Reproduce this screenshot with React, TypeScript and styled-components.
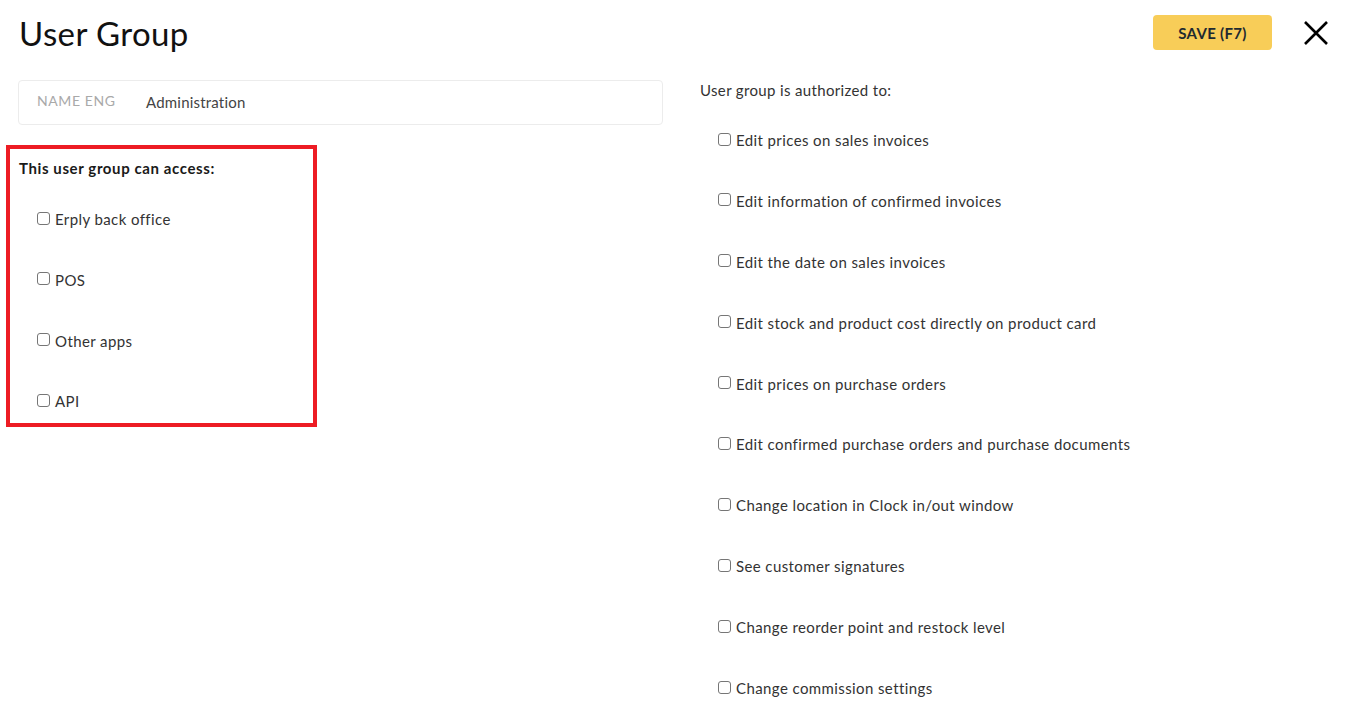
import React from "react";
import styled, { createGlobalStyle } from "styled-components";

const Global = createGlobalStyle`
  html, body { margin: 0; padding: 0; background: #fff; }
  body { font-family: "Lato", "Liberation Sans", sans-serif; color: #333; }
  * { box-sizing: border-box; }
`;

const Page = styled.div`
  width: 1369px;
  height: 727px;
  overflow: hidden;
`;

const Header = styled.header`
  display: flex;
  align-items: flex-start;
  justify-content: space-between;
  height: 80px;
  padding: 15px 39px 0 19px;
`;

const Title = styled.h1`
  margin: 0;
  font-size: 33px;
  font-weight: 400;
  line-height: 36px;
  letter-spacing: 0.4px;
  color: #111;
`;

const Actions = styled.div`
  display: flex;
  align-items: center;
  gap: 30px;
`;

const SaveButton = styled.button`
  width: 119px;
  height: 35px;
  border: none;
  border-radius: 4px;
  background: #f8cd58;
  color: #1f2a30;
  font-family: inherit;
  font-size: 15px;
  font-weight: 700;
  letter-spacing: 0.3px;
  padding: 0;
  cursor: pointer;
`;

const CloseButton = styled.button`
  width: 28px;
  height: 28px;
  border: none;
  background: none;
  padding: 0;
  display: flex;
  align-items: center;
  justify-content: center;
  cursor: pointer;
`;

const Body = styled.div`
  display: grid;
  grid-template-columns: 645px 1fr;
  column-gap: 37px;
  padding-left: 18px;
`;

const LeftColumn = styled.div`
  display: flex;
  flex-direction: column;
  gap: 20px;
`;

const NameField = styled.div`
  display: flex;
  align-items: center;
  height: 45px;
  border: 1px solid #ececec;
  border-radius: 4px;
  padding-left: 18px;
`;

const FieldLabel = styled.span`
  width: 109px;
  font-size: 14px;
  letter-spacing: 0.6px;
  color: #a9a9a9;
  text-transform: uppercase;
  margin-top: -4px;
`;

const FieldValue = styled.span`
  font-size: 15px;
  letter-spacing: 0.2px;
  color: #444;
  margin-top: -1px;
`;

const AccessBox = styled.section`
  width: 311px;
  margin-left: -12px;
  border: 4px solid #ed1c24;
  padding: 9px 9px 12px 9px;
`;

const SectionTitle = styled.div<{ $bold?: boolean }>`
  font-size: 15px;
  line-height: 20px;
  font-weight: ${(p) => (p.$bold ? 700 : 400)};
  letter-spacing: ${(p) => (p.$bold ? "0.6px" : "0.35px")};
  color: ${(p) => (p.$bold ? "#1a1a1a" : "#333")};
`;

const OptionList = styled.div<{ $top: number; $gap: number }>`
  display: flex;
  flex-direction: column;
  gap: ${(p) => p.$gap}px;
  margin-top: ${(p) => p.$top}px;
  padding-left: 18px;
`;

const Option = styled.label`
  display: flex;
  align-items: center;
  gap: 5px;
  font-size: 15px;
  line-height: 20px;
  letter-spacing: 0.4px;
  color: #333;
`;

const Check = styled.input.attrs({ type: "checkbox" })`
  appearance: none;
  margin: 0;
  width: 13px;
  height: 13px;
  border: 1px solid #767676;
  border-radius: 3px;
  background: #fff;
  flex: none;
  position: relative;
  top: -1px;
`;

const RightColumn = styled.div``;

const accessOptions = ["Erply back office", "POS", "Other apps", "API"];

const permissions = [
  "Edit prices on sales invoices",
  "Edit information of confirmed invoices",
  "Edit the date on sales invoices",
  "Edit stock and product cost directly on product card",
  "Edit prices on purchase orders",
  "Edit confirmed purchase orders and purchase documents",
  "Change location in Clock in/out window",
  "See customer signatures",
  "Change reorder point and restock level",
  "Change commission settings",
];

export default function App() {
  return (
    <Page>
      <Global />
      <Header>
        <Title>User Group</Title>
        <Actions>
          <SaveButton>SAVE (F7)</SaveButton>
          <CloseButton aria-label="Close">
            <svg width="24" height="24" viewBox="0 0 24 24">
              <path d="M1 1 L23 23 M23 1 L1 23" stroke="#000" strokeWidth="2.6" fill="none" />
            </svg>
          </CloseButton>
        </Actions>
      </Header>
      <Body>
        <LeftColumn>
          <NameField>
            <FieldLabel>Name ENG</FieldLabel>
            <FieldValue>Administration</FieldValue>
          </NameField>
          <AccessBox>
            <SectionTitle $bold>This user group can access:</SectionTitle>
            <OptionList $top={31} $gap={40.8}>
              {accessOptions.map((o) => (
                <Option key={o}>
                  <Check />
                  {o}
                </Option>
              ))}
            </OptionList>
          </AccessBox>
        </LeftColumn>
        <RightColumn>
          <SectionTitle>User group is authorized to:</SectionTitle>
          <OptionList $top={30} $gap={40.9}>
            {permissions.map((o) => (
              <Option key={o}>
                <Check />
                {o}
              </Option>
            ))}
          </OptionList>
        </RightColumn>
      </Body>
    </Page>
  );
}
